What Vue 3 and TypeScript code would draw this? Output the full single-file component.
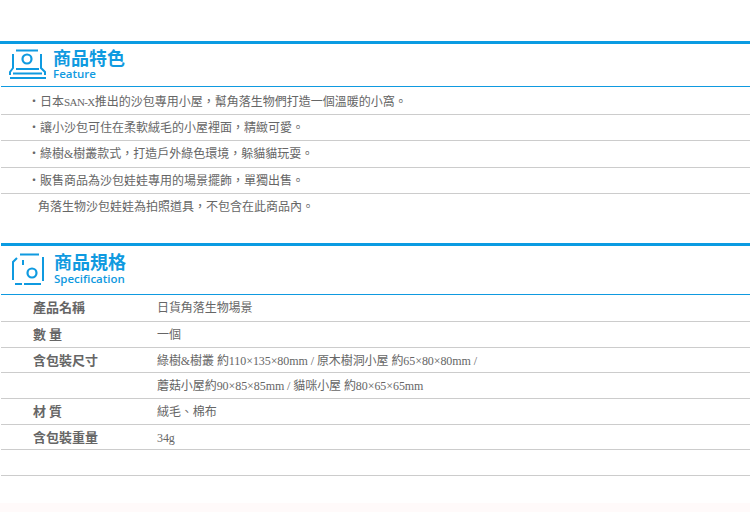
<script setup lang="ts">
const features: { pre: string; latin?: string; post?: string; bullet: boolean }[] = [
  { pre: '日本', latin: 'SAN-X', post: '推出的沙包專用小屋，幫角落生物們打造一個溫暖的小窩。', bullet: true },
  { pre: '讓小沙包可住在柔軟絨毛的小屋裡面，精緻可愛。', bullet: true },
  { pre: '綠樹&樹叢款式，打造戶外綠色環境，躲貓貓玩耍。', bullet: true },
  { pre: '販售商品為沙包娃娃專用的場景擺飾，單獨出售。', bullet: true },
  { pre: '角落生物沙包娃娃為拍照道具，不包含在此商品內。', bullet: false },
]
const specs: { label: string; value: string }[] = [
  { label: '產品名稱', value: '日貨角落生物場景' },
  { label: '數 量', value: '一個' },
  { label: '含包裝尺寸', value: '綠樹&樹叢 約110×135×80mm / 原木樹洞小屋 約65×80×80mm /' },
  { label: '', value: '蘑菇小屋約90×85×85mm / 貓咪小屋 約80×65×65mm' },
  { label: '材 質', value: '絨毛、棉布' },
  { label: '含包裝重量', value: '34g' },
  { label: '', value: '' },
]
</script>

<template>
  <div class="page">
    <section class="sec first">
      <header class="head">
        <svg class="icon" width="38" height="32" viewBox="0 0 38 32" fill="none" stroke="#0f9ae0" stroke-width="2">
          <path d="M7 1.500H29M4 5V19L1 23V26M32 5V19L36 23V26M7 20H30M4 24.500H33M1 29H37" />
          <circle cx="18" cy="10" r="4.500" stroke-width="2.200" />
        </svg>
        <div class="titles">
          <div class="zh">商品特色</div>
          <div class="en">Feature</div>
        </div>
      </header>
      <ul class="list">
        <li v-for="f in features" :key="f.pre" class="item" :class="{ plain: !f.bullet }">
          <span class="dot">{{ f.bullet ? '‧' : '' }}</span>{{ f.pre }}<span v-if="f.latin" class="latin">{{ f.latin }}</span>{{ f.post }}
        </li>
      </ul>
    </section>

    <section class="sec second">
      <header class="head">
        <svg class="icon" width="38" height="34" viewBox="0 0 38 34" fill="none" stroke="#0f9ae0" stroke-width="2">
          <path d="M9 1.500H28M2 27V9L6 5M12 7V12M32 4V28M4 31H11M13 31H30" />
          <circle cx="21" cy="20" r="4.500" stroke-width="2.200" />
        </svg>
        <div class="titles">
          <div class="zh">商品規格</div>
          <div class="en">Specification</div>
        </div>
      </header>
      <div class="table">
        <div v-for="(s, i) in specs" :key="i" class="row">
          <div class="label">{{ s.label }}</div>
          <div class="value">{{ s.value }}</div>
        </div>
      </div>
    </section>
    <div class="foot"></div>
  </div>
</template>

<style scoped>
.page {
  width: 750px;
  height: 512px;
  overflow: hidden;
  background: #fff;
  color: #666;
  font-family: "Liberation Serif", "Noto Sans CJK TC", serif;
  font-size: 12px;
  display: flex;
  flex-direction: column;
}
.sec {
  border-top: 3px solid #0a9be2;
}
.first {
  margin-top: 41px;
}
.second {
  margin-top: 22.4px;
  margin-left: 1px;
}
.head {
  height: 42px;
  display: flex;
  align-items: center;
  gap: 6px;
  padding-left: 9px;
}
.second .head {
  height: 48px;
  padding-left: 10px;
  gap: 5px;
}
.icon {
  flex: none;
}
.titles {
  padding-bottom: 1px;
}
.zh {
  color: #0f9ae0;
  font: 700 18px/18px "Noto Sans CJK TC", sans-serif;
}
.en {
  margin-top: 1px;
  color: #0f9ae0;
  font: 600 11.500px/14px "Open Sans", sans-serif;
}
.second .en {
  line-height: 16px;
}
.list {
  list-style: none;
  margin: 0 0 0 1px;
  padding: 0;
  border-top: 1px solid #0f9ae0;
}
.item {
  height: 26.400px;
  line-height: 27px;
  padding-left: 27px;
  border-bottom: 1px solid #ccc;
  box-sizing: border-box;
}
.item:first-child {
  height: 28px;
  padding-top: 2px;
}
.item.plain {
  border-bottom: 0;
}
.latin {
  font-size: 11px;
  letter-spacing: -0.6px;
}
.dot {
  display: inline-block;
  width: 10px;
  margin-right: 2px;
  text-align: center;
}
.plain .dot {
  margin-right: 0;
}
.table {
  border-top: 1px solid #0f9ae0;
}
.row {
  height: 25.700px;
  box-sizing: border-box;
  border-bottom: 1px solid #ccc;
  display: grid;
  grid-template-columns: 156px 1fr;
  line-height: 25px;
}
.row:first-child {
  height: 27px;
}
.label {
  padding-left: 32px;
  font-size: 13px;
  font-weight: 700;
  line-height: 24px;
  color: #666;
  font-family: "Noto Sans CJK TC", sans-serif;
}
.value {
  padding-top: 1px;
  letter-spacing: -0.07px;
  white-space: nowrap;
}
.foot {
  margin-top: auto;
  height: 9px;
  background: #fffafa;
}
</style>
